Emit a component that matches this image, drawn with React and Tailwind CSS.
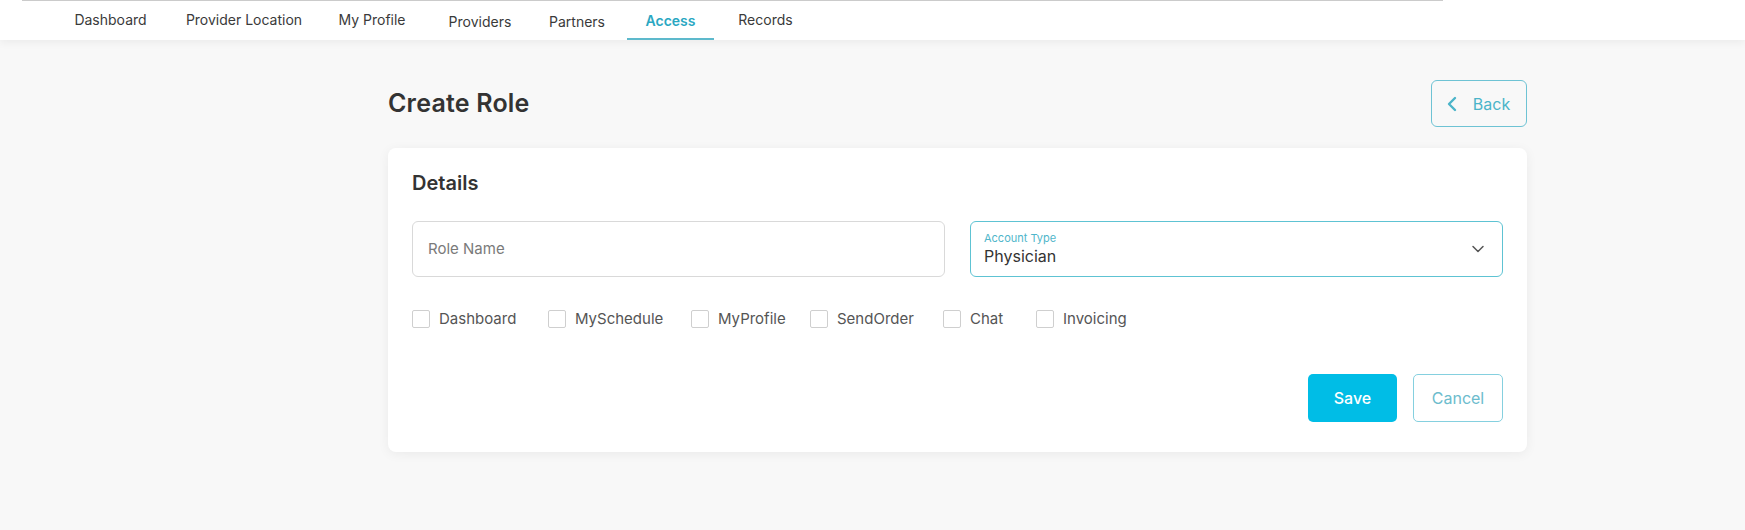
import React, { useState } from "react";
import { ChevronLeft, ChevronDown } from "lucide-react";

const tabs = [
  { label: "Dashboard", w: "w-[133px]", shift: "pb-[2px]" },
  { label: "Provider Location", w: "w-[134px]", shift: "pb-[2px]" },
  { label: "My Profile", w: "w-[122px]", shift: "pb-[2px]" },
  { label: "Providers", w: "w-[94px]", shift: "pt-[2px]" },
  { label: "Partners", w: "w-[100px]", shift: "pt-[2px]" },
  { label: "Access", w: "w-[87px]", shift: "pt-[2px]", active: true },
  { label: "Records", w: "w-[103px]", shift: "pb-[2px]" },
];

const perms = [
  { label: "Dashboard", w: "w-[136px]" },
  { label: "MySchedule", w: "w-[143px]" },
  { label: "MyProfile", w: "w-[119px]" },
  { label: "SendOrder", w: "w-[133px]" },
  { label: "Chat", w: "w-[93px]" },
  { label: "Invoicing", w: "w-auto" },
];

export default function App() {
  const [checked, setChecked] = useState({});

  return (
    <div className="min-h-screen bg-[#f8f8f8] font-['Inter','Liberation_Sans',sans-serif] text-[#333]">
      <header className="h-10 bg-white shadow-[0_3px_8px_rgba(0,0,0,0.05)]">
        <nav className="ml-[22px] w-[1421px] h-10 border-t border-[#cbcbcb] flex">
          <div className="w-[22px]" />
          {tabs.map((t) => (
            <div
              key={t.label}
              className={`${t.w} ${t.shift} h-full flex items-center justify-center text-[14px] ${
                t.active
                  ? "text-[#2aa7c2] font-semibold border-b-2 border-[#5db9cc]"
                  : "text-[#3a3a3a]"
              }`}
            >
              {t.label}
            </div>
          ))}
        </nav>
      </header>

      <main className="ml-[388px] w-[1139px] pt-10">
        <div className="flex items-center justify-between">
          <h1 className="text-[25px] font-semibold text-[#333] tracking-[0.2px]">Create Role</h1>
          <button className="w-[96px] h-[47px] flex items-center justify-center gap-[9px] border border-[#6ec3d4] rounded-md text-[16px] text-[#4bb4c9]">
            <ChevronLeft className="w-6 h-6 -ml-2" strokeWidth={2.4} />
            Back
          </button>
        </div>

        <section className="mt-[21px] bg-white rounded-lg shadow-[0_2px_12px_rgba(0,0,0,0.06)] px-6 pt-[21px] pb-[30px]">
          <h2 className="text-[20px] leading-7 font-semibold text-[#333]">Details</h2>

          <div className="mt-6 grid grid-cols-2 gap-[25px]">
            <div className="h-14 border border-[#d9d9d9] rounded-md flex items-center pl-[15px] text-[15px] text-[#7a7a7a]">
              Role Name
            </div>
            <div className="h-14 border-[1.5px] border-[#5ec3d3] rounded-md flex items-center justify-between pl-[13px] pr-[14px]">
              <div className="flex flex-col">
                <span className="text-[11px] leading-[14px] text-[#4fb6ca]">Account Type</span>
                <span className="text-[16px] leading-[22px] text-[#333]">Physician</span>
              </div>
              <ChevronDown className="w-5 h-5 text-[#555]" strokeWidth={1.8} />
            </div>
          </div>

          <div className="mt-[31px] flex items-center">
            {perms.map((p) => (
              <label key={p.label} className={`${p.w} flex items-center gap-[9px] cursor-pointer`}>
                <span
                  onClick={() => setChecked({ ...checked, [p.label]: !checked[p.label] })}
                  className={`w-[18px] h-[18px] border border-[#cfcfcf] rounded-[2px] ${
                    checked[p.label] ? "bg-[#00bde6]" : "bg-white"
                  }`}
                />
                <span className="text-[15px] leading-[22px] text-[#555]">{p.label}</span>
              </label>
            ))}
          </div>

          <div className="mt-[44px] flex justify-end gap-4">
            <button className="w-[89px] h-12 rounded-[5px] bg-[#00bde6] text-white text-[16px] font-medium">
              Save
            </button>
            <button className="w-[90px] h-12 rounded-[5px] border border-[#85d0df] text-[#6cbccd] text-[16px]">
              Cancel
            </button>
          </div>
        </section>
      </main>
    </div>
  );
}
